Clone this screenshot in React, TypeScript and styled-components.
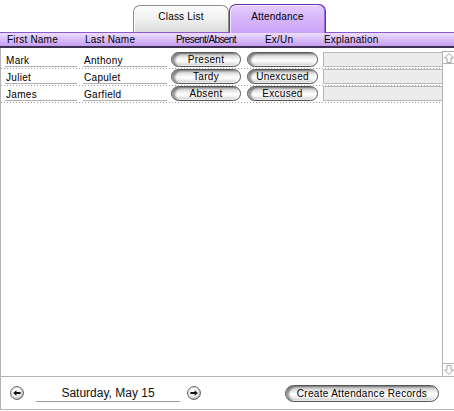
import React from "react";
import styled, { createGlobalStyle } from "styled-components";

const GlobalStyle = createGlobalStyle`
  html, body { margin: 0; padding: 0; background: #fff; }
  body { font-family: "Liberation Sans", Arial, sans-serif; }
  *, *::before, *::after { box-sizing: border-box; }
`;

const COLS = "78px 88px 76px 76px 1fr";

const Page = styled.div`
  width: 454px;
  height: 411px;
  display: flex;
  flex-direction: column;
  background: #fff;
  font-family: "Liberation Sans", Arial, sans-serif;
  font-size: 10px;
  color: #000;
  overflow: hidden;
`;

const TabBar = styled.div`
  position: relative;
  z-index: 1;
  height: 32px;
  flex: none;
  display: flex;
  align-items: flex-end;
  padding-left: 133px;
`;

const Tab = styled.div<{ $active?: boolean }>`
  width: ${(p) => (p.$active ? 97 : 96)}px;
  height: ${(p) => (p.$active ? 29 : 27)}px;
  margin-bottom: ${(p) => (p.$active ? -1 : 0)}px;
  border: 1px solid ${(p) => (p.$active ? "#6432ac" : "#8c8c8c")};
  border-bottom: none;
  border-radius: 7px 7px 0 0;
  background: ${(p) =>
    p.$active
      ? "linear-gradient(to bottom, #e6ceff 0%, #d8b8fb 45%, #caa2f5 100%)"
      : "linear-gradient(to bottom, #fbfbfb 0%, #f0f0f0 50%, #dadada 100%)"};
  box-shadow: ${(p) =>
    p.$active ? "inset -1px 0 0 #9a6ad8, inset 1px 1px 0 #f4eaff" : "inset 1px 1px 0 #ffffff"};
  text-align: center;
  padding-top: ${(p) => (p.$active ? 6 : 5)}px;
  line-height: 12px;
  font-size: 10px;
  letter-spacing: 0.2px;
`;

const HeaderRow = styled.div`
  flex: none;
  height: 16px;
  border-top: 1px solid #8a58d0;
  border-bottom: 2px solid #3e3050;
  background: linear-gradient(to bottom, #ecdeff 0%, #d8bef9 50%, #c49ef1 100%);
  display: grid;
  grid-template-columns: ${COLS};
  padding-left: 5px;
  padding-top: 1px;
  line-height: 12px;
  white-space: nowrap;
  letter-spacing: 0.2px;
`;

const HeaderCell = styled.div<{ $pad?: number; $center?: boolean; $tight?: boolean }>`
  padding-left: ${(p) => p.$pad ?? 0}px;
  text-align: ${(p) => (p.$center ? "center" : "left")};
  letter-spacing: ${(p) => (p.$tight ? "-0.6px" : "0.2px")};
  width: ${(p) => (p.$center ? "70px" : "auto")};
`;

const Body = styled.div`
  flex: none;
  height: 329px;
  display: flex;
  border-left: 1px solid #b4b4b4;
  border-bottom: 1px solid #b4b4b4;
`;

const List = styled.div`
  flex: 1;
  display: flex;
  flex-direction: column;
  padding-top: 4px;
`;

const Row = styled.div`
  height: 17px;
  display: grid;
  grid-template-columns: ${COLS};
  padding-left: 4px;
  padding-bottom: 2px;
  background: repeating-linear-gradient(to right, #a0a0a0 0 1px, transparent 1px 3px)
    left bottom / 100% 1px no-repeat;
`;

const TextCell = styled.div<{ $w: number }>`
  width: ${(p) => p.$w}px;
  height: 15px;
  border-bottom: 1px solid #b0b0b0;
  padding-top: 3px;
  padding-left: 1px;
  line-height: 11px;
  white-space: nowrap;
  letter-spacing: 0.3px;
`;

const Pill = styled.div<{ $w: number; $h?: number }>`
  width: ${(p) => p.$w}px;
  height: ${(p) => p.$h ?? 15}px;
  border: 1px solid #555;
  border-radius: 9px;
  background: linear-gradient(
    to bottom,
    #b8b8b8 0%,
    #e0e0e0 25%,
    #ffffff 55%,
    #f0f0f0 75%,
    #c4c4c4 100%
  );
  box-shadow: inset 3px 1px 2px rgba(0, 0, 0, 0.4),
    inset -1px -1px 1px rgba(255, 255, 255, 0.8);
  text-align: center;
  line-height: ${(p) => (p.$h ?? 15) - 2}px;
  white-space: nowrap;
  letter-spacing: 0.3px;
`;

const ExplField = styled.div`
  height: 15px;
  border: 1px solid #b8b8b8;
  border-right: none;
  background: #ececec;
`;

const Scrollbar = styled.div`
  width: 12px;
  margin-top: 3px;
  border-left: 1px solid #b4b4b4;
  border-top: 1px solid #b4b4b4;
  display: flex;
  flex-direction: column;
  justify-content: space-between;
`;

const ArrowBox = styled.div<{ $down?: boolean }>`
  height: ${(p) => (p.$down ? 13 : 12)}px;
  display: flex;
  align-items: center;
  justify-content: center;
  border-bottom: ${(p) => (p.$down ? "none" : "1px solid #b4b4b4")};
  border-top: ${(p) => (p.$down ? "1px solid #b4b4b4" : "none")};
`;

const Footer = styled.div`
  flex: none;
  height: 33px;
  display: flex;
  align-items: center;
  border-left: 1px solid #b4b4b4;
  border-bottom: 1px solid #b4b4b4;
  padding-left: 9px;
  padding-right: 15px;
`;

const DateField = styled.div`
  width: 144px;
  height: 18px;
  margin-left: 12px;
  margin-right: 7px;
  padding-top: 2px;
  padding-bottom: 1px;
  border-bottom: 1px solid #9a9a9a;
  text-align: center;
  font-size: 12px;
  line-height: 14px;
  color: #111;
`;

const CreateButton = styled(Pill)`
  margin-left: auto;
  letter-spacing: 0.3px;
`;

const ScrollArrow = ({ down }: { down?: boolean }) => (
  <svg width="10" height="10" viewBox="0 0 10 10" style={{ display: "block" }}>
    <polygon
      points={
        down
          ? "5,9.5 9.5,5 7,5 7,0.5 3,0.5 3,5 0.5,5"
          : "5,0.5 9.5,5 7,5 7,9.5 3,9.5 3,5 0.5,5"
      }
      fill="#fff"
      stroke="#a4a4a4"
      strokeWidth="1"
    />
  </svg>
);

const CircleArrow = ({ right }: { right?: boolean }) => (
  <svg width="14" height="14" viewBox="0 0 14 14" style={{ display: "block", flex: "none" }}>
    <defs>
      <radialGradient id={right ? "cgr" : "cgl"} cx="40%" cy="35%" r="70%">
        <stop offset="0" stopColor="#ffffff" />
        <stop offset="0.6" stopColor="#ececec" />
        <stop offset="1" stopColor="#b0b0b0" />
      </radialGradient>
    </defs>
    <circle cx="7" cy="7" r="6.4" fill={`url(#${right ? "cgr" : "cgl"})`} stroke="#5a5a5a" />
    <path
      d={
        right
          ? "M10.8 7 L7.6 4.2 V6 H3.4 V8 H7.6 V9.8 Z"
          : "M3.2 7 L6.4 4.2 V6 H10.6 V8 H6.4 V9.8 Z"
      }
      fill="#111"
    />
  </svg>
);

type Student = { first: string; last: string; status: string; excuse: string };

const students: Student[] = [
  { first: "Mark", last: "Anthony", status: "Present", excuse: "" },
  { first: "Juliet", last: "Capulet", status: "Tardy", excuse: "Unexcused" },
  { first: "James", last: "Garfield", status: "Absent", excuse: "Excused" },
];

export default function App() {
  return (
    <>
      <GlobalStyle />
      <Page>
        <TabBar>
          <Tab>Class List</Tab>
          <Tab $active>Attendance</Tab>
        </TabBar>
        <HeaderRow>
          <HeaderCell $pad={2}>First Name</HeaderCell>
          <HeaderCell $pad={2}>Last Name</HeaderCell>
          <HeaderCell $center $tight>Present/Absent</HeaderCell>
          <HeaderCell $pad={18}>Ex/Un</HeaderCell>
          <HeaderCell $pad={1}>Explanation</HeaderCell>
        </HeaderRow>
        <Body>
          <List>
            {students.map((s) => (
              <Row key={s.first}>
                <TextCell $w={72}>{s.first}</TextCell>
                <TextCell $w={84}>{s.last}</TextCell>
                <Pill $w={70}>{s.status}</Pill>
                <Pill $w={71}>{s.excuse}</Pill>
                <ExplField />
              </Row>
            ))}
          </List>
          <Scrollbar>
            <ArrowBox>
              <ScrollArrow />
            </ArrowBox>
            <ArrowBox $down>
              <ScrollArrow down />
            </ArrowBox>
          </Scrollbar>
        </Body>
        <Footer>
          <CircleArrow />
          <DateField>Saturday, May 15</DateField>
          <CircleArrow right />
          <CreateButton $w={154} $h={17}>Create Attendance Records</CreateButton>
        </Footer>
      </Page>
    </>
  );
}
